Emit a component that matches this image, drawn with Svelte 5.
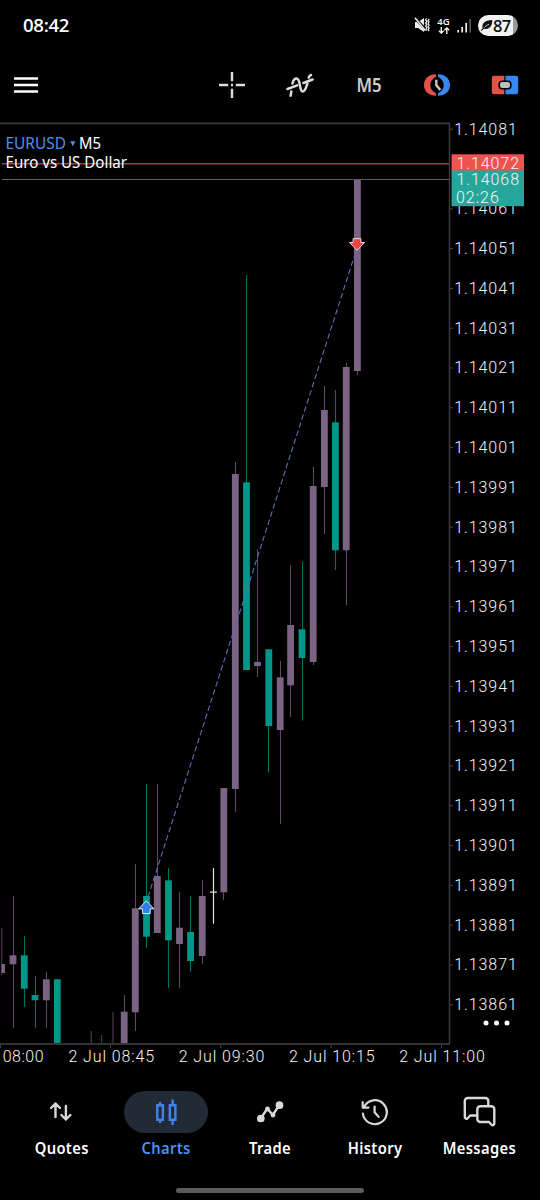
<script>
  const UP = '#7b6383';
  const DOWN = '#009688';
  // [centre x, high, body top, body bottom, low, colour]
  const candles = [
    [13, 896, 955.3, 964.3, 1027.7, UP],
    [24.3, 936, 955.3, 988.7, 1007, DOWN],
    [35, 976, 995, 1000.3, 1027.7, DOWN],
    [46.3, 972, 979.3, 1000.3, 1027.7, UP],
    [57.3, 979.3, 979.3, 1043, 1043, DOWN],
    [124.2, 995, 1011.7, 1043, 1043, UP],
    [135.3, 864, 908.3, 1012.3, 1031, UP],
    [146.5, 784, 896, 936.7, 947.7, DOWN],
    [157.3, 784, 876, 933, 933, UP],
    [168.5, 868, 880.3, 940.3, 988, DOWN],
    [179.5, 892, 927.7, 944, 988, UP],
    [190.6, 896, 932, 961, 971.7, DOWN],
    [202.2, 880, 896, 956, 963.7, UP],
    [223.8, 788, 788, 892.3, 900, UP],
    [235.3, 462, 474, 789, 812, UP],
    [246.5, 275, 482.3, 670, 670, DOWN],
    [257.5, 549.3, 662, 666, 677, UP],
    [268.8, 649.3, 649.3, 726, 772.7, DOWN],
    [280.2, 661, 677.3, 730, 824, UP],
    [290.6, 565.3, 625, 685.3, 717, UP],
    [302, 561.7, 629.3, 658, 720.7, DOWN],
    [313.2, 466.7, 486, 662, 665, UP],
    [324.4, 386, 410, 487, 534, UP],
    [335.4, 390, 422.3, 550.3, 570, DOWN],
    [346.2, 362.7, 367, 550.3, 605.3, UP],
    [357.4, 180, 180, 371, 375, UP]
  ];
  const prices = Array.from({ length: 23 }, (_, i) => ({
    label: ((114081 - i * 10) / 100000).toFixed(5),
    y: 129.2 + i * 39.8
  })).filter((p) => p.label !== '1.14071');
  const times = [
    { x: -38, tick: 0.5, label: '2 Jul 08:00' },
    { x: 68.5, tick: 110.5, label: '2 Jul 08:45' },
    { x: 178.8, tick: 220.8, label: '2 Jul 09:30' },
    { x: 289, tick: 331.2, label: '2 Jul 10:15' },
    { x: 399.3, tick: 441.5, label: '2 Jul 11:00' }
  ];
</script>

<div class="screen">
  <header class="status">
    <span class="clock">08:42</span>
    <div class="indicators">
      <svg width="16" height="16" viewBox="0 0 16 16">
        <path d="M1 5h3l6-4v14l-6-4H1z" fill="#eee" />
        <path d="M1.5 1.5l12 13" stroke="#000" stroke-width="2.600" />
        <path d="M1 .8l10.500 13" stroke="#eee" stroke-width="1.500" />
        <path d="M12.500 1.500l-1 1.500 1.500 1.500-1.500 1.500 1.500 1.500-1.500 1.500 1.500 1.500-1 1.500 1 1.500M15.300 2l-1.200 1.300 1 1.500-1 1.700 1 1.500-1 1.700 1 1.500-1 1.500 1 1.500" fill="none" stroke="#eee" stroke-width="1.200" />
      </svg>
      <div class="net">
        <span>4G</span>
        <svg width="12" height="7" viewBox="0 0 12 7" fill="none" stroke="#eee" stroke-width="1.4">
          <path d="M3.3 0v6M.9 3.7l2.400 2.400 2.400-2.400M8.800 7V1M6.400 3.300l2.400-2.400 2.400 2.400" />
        </svg>
      </div>
      <svg width="15" height="15" viewBox="0 0 15 15">
        <path d="M1.200 12v2.600M5.200 9v5.600M9.200 5v9.600" stroke="#eee" stroke-width="1.700" />
        <path d="M13.200 1v13.600" stroke="#555" stroke-width="1.700" />
      </svg>
      <div class="battery">
        <svg width="12" height="12" viewBox="0 0 12 12">
          <path d="M1.600 9C.7 5 3.500 1 11.300 1c0 6-2.700 9.400-7.200 8.900-.9 0-1.600-.4-2.500-.9z" fill="#111" />
          <path d="M2.600 9.300C4 7.600 5.500 6.400 8 5.200" stroke="#f2f2f2" stroke-width=".8" fill="none" />
          <path d="M.3 11.500L3 8.700" stroke="#111" stroke-width="1.200" />
        </svg>
        <span>87</span>
      </div>
    </div>
  </header>

  <div class="toolbar">
    <svg class="menu" width="24" height="18" viewBox="0 0 24 18">
      <path d="M0 2.500h24M0 9h24M0 15.500h24" stroke="#fff" stroke-width="2.500" />
    </svg>
    <svg class="cross" width="28" height="28" viewBox="0 0 28 28" stroke="#ddd" stroke-width="2.400">
      <path d="M14 1v9.200M14 17.800V27M1 14h9.200M17.800 14H27M13 14h2" />
    </svg>
    <svg class="indicator" width="28" height="26" viewBox="0 0 28 26" fill="none" stroke="#ddd" stroke-width="2.500" stroke-linecap="round">
      <path d="M1.500 17L11.200 13.300M17.500 11l9-3.500" />
      <path d="M4.600 23.700l.7-4.200M6.500 11.500c.8-3.300 2.200-5 3.900-5 4.800 0 2.300 13 6.300 13 2.700 0 3.500-4.800 4.700-7.800M22.700 5.600c.4-1.300 1.100-2.200 2.300-2.600" />
    </svg>
    <span class="period">M5</span>
    <svg class="session" width="28" height="24" viewBox="0 0 28 24">
      <path d="M13 1.200C5.800 1.200 1 5.800 1 12s4.800 10.800 12 10.800v-2.500C9.400 18.500 7.300 15.700 7.300 12S9.400 5.500 13 3.700z" fill="#df5349" />
      <path d="M15 1.200C22.200 1.200 27 5.800 27 12s-4.800 10.800-12 10.800v-2.500c3.600-1.800 5.700-4.600 5.700-8.300S18.600 5.500 15 3.700z" fill="#3688ef" />
      <path d="M13.300 6.700V12l4 5" fill="none" stroke="#c8c8c8" stroke-width="2.400" />
    </svg>
    <svg class="order" width="28" height="20" viewBox="0 0 28 20">
      <path d="M3 .7h10.300v18.600H3A2.200 2.200 0 0 1 .8 17V3A2.200 2.200 0 0 1 3 .7z" fill="#df5349" />
      <path d="M14.500.7H25A2.200 2.200 0 0 1 27.200 3v14a2.200 2.200 0 0 1-2.200 2.300H14.500z" fill="#3688ef" />
      <rect x="8.200" y="6.300" width="11.600" height="7.400" rx="3" fill="#b9c0bf" stroke="#000" stroke-width="1.600" />
    </svg>
  </div>

  <svg class="chart" width="540" height="948" viewBox="0 122 540 948">
    <path d="M0 123.300H449.500" stroke="#39393d" stroke-width="1.800" />
    <path d="M449.500 122.500V1044" stroke="#39393f" stroke-width="1.500" />
    <path d="M0 1044H450" stroke="#444447" stroke-width="1.700" />

    <path d="M2 163.700H449" stroke="#91444a" stroke-width="1.500" />
    <path d="M2 179.500H449" stroke="#4a676d" stroke-width="1.200" />

    <path d="M1.800 927.700V975" stroke={UP} stroke-opacity=".7" />
    <rect x="1.500" y="964" width="3.500" height="9" fill={UP} />
    <path d="M91.200 1031v12M113 1011.700V1043" stroke={UP} stroke-opacity=".7" />
    <path d="M101.700 1035v8" stroke={DOWN} stroke-opacity=".7" />

    {#each candles as [x, high, top, bottom, low, color]}
      <path d="M{Math.floor(x) + 0.5} {high}V{low}" stroke={color} stroke-opacity=".75" stroke-width="1.100" />
      <rect x={x - 3.4} y={top} width="6.800" height={bottom - top} fill={color} />
    {/each}
    <path d="M213.500 868v55.700M210 892.200h7" stroke="#e0e0e0" stroke-width="1.200" />

    <path d="M148 897L357 248" stroke="#5f6ab8" stroke-width="1.100" stroke-dasharray="5.500 3" />
    <path d="M146.300 900.700l7.600 8.200h-3.700v4.600h-7.800v-4.600h-3.700z" fill="#2f80ed" stroke="#dfe9f3" />
    <path d="M357 250.300l7.600-7.800h-3.700v-3.800h-7.800v3.800h-3.700z" fill="#ee4245" stroke="#f3d9da" />

    <g class="axis">
      {#each prices as p}
        <path d="M450 {p.y}h3" stroke="#45454a" />
        <text x="454.300" y={p.y + 5.3} textLength="62.500">{p.label}</text>
      {/each}
      {#each times as t}
        <path d="M{t.tick} 1045v3" stroke="#45454a" />
        <text x={t.x} y="1061.500" textLength={t.x < 0 ? 81.5 : 85.5}>{t.label}</text>
      {/each}
      <rect x="451.500" y="154.300" width="72.500" height="17" fill="#ef5350" />
      <rect x="451.500" y="170.500" width="72.500" height="35.700" fill="#26a69a" />
      <text x="456.500" y="168.900" textLength="62.500">1.14072</text>
      <text x="456.500" y="184.700" textLength="62.500">1.14068</text>
      <text x="456" y="202.600" textLength="42.800">02:26</text>
    </g>
    <g fill="#fff">
      <circle cx="486" cy="1023" r="2.500" />
      <circle cx="496.500" cy="1023" r="2.500" />
      <circle cx="507" cy="1023" r="2.500" />
    </g>
    <g class="title">
      <text x="5.500" y="149.300" textLength="60.500" lengthAdjust="spacingAndGlyphs" fill="#4a90f0">EURUSD</text>
      <path d="M70.300 141.300h5l-2.500 5z" fill="#4a90f0" />
      <text x="79" y="149.300" textLength="22" lengthAdjust="spacingAndGlyphs">M5</text>
      <text x="5.500" y="168.300" textLength="121.500" lengthAdjust="spacingAndGlyphs">Euro vs US Dollar</text>
    </g>
  </svg>

  <nav>
    <div class="item">
      <div class="pill">
        <svg width="24" height="22" viewBox="0 0 24 22" fill="none" stroke="#d8d8d8" stroke-width="2.400" stroke-linecap="round" stroke-linejoin="round">
          <path d="M6.500 16V2.500M2 7l4.500-4.500L11 7M16.900 5v13.500M12.400 14l4.500 4.500 4.500-4.500" />
        </svg>
      </div>
      <span>Quotes</span>
    </div>
    <div class="item active">
      <div class="pill">
        <svg width="24" height="28" viewBox="0 0 24 28" fill="none" stroke="#3f84ee" stroke-width="2.400">
          <path d="M3.300 7.200h5.600v14.500H3.300zM6.100 4v3M6.100 22v3M15.800 7.200h5.600v14.500h-5.600zM18.600 1.500V7M18.600 22v5" />
        </svg>
      </div>
      <span>Charts</span>
    </div>
    <div class="item">
      <div class="pill">
        <svg width="28" height="24" viewBox="0 0 28 24" fill="#d8d8d8" stroke="#d8d8d8" stroke-width="2.300" stroke-linejoin="round">
          <path d="M4.800 18.500L11.300 8.500l5.500 6.500 6.500-10" fill="none" />
          <circle cx="4.800" cy="18.500" r="2.700" />
          <circle cx="11.500" cy="9" r="1.300" />
          <circle cx="17" cy="15" r="1.300" />
          <circle cx="23.500" cy="5.200" r="2.700" />
        </svg>
      </div>
      <span>Trade</span>
    </div>
    <div class="item">
      <div class="pill">
        <svg width="28" height="28" viewBox="0 0 28 28" fill="none" stroke="#d8d8d8" stroke-width="2.200" stroke-linecap="round" stroke-linejoin="round">
          <path d="M1.900 15.500A12 12 0 1 0 3.200 8.600M1.700 4.200v5.400h5.800M13.600 8.600v5.700l4 4.600" />
        </svg>
      </div>
      <span>History</span>
    </div>
    <div class="item">
      <div class="pill">
        <svg width="34" height="32" viewBox="0 0 34 32" fill="none" stroke="#d8d8d8" stroke-width="2.400" stroke-linejoin="round" stroke-linecap="round">
          <path d="M13.200 19.500H7.300l-3 3c-.8.700-2.500.2-2.500-1.400V5a3 3 0 0 1 3-3h17.500a3 3 0 0 1 3 3v5" />
          <path d="M17.300 10.300h11a3 3 0 0 1 3 3v14.300c0 1.800-1.900 2-2.800 1.100l-2.500-2.700h-8.700a3 3 0 0 1-3-3v-9.700a3 3 0 0 1 3-3z" />
        </svg>
      </div>
      <span>Messages</span>
    </div>
  </nav>
  <div class="handle"></div>
</div>

<style>
  :global(body) { margin: 0; background: #000; }
  .screen {
    width: 540px;
    height: 1200px;
    display: flex;
    flex-direction: column;
    overflow: hidden;
    background: #000;
    color: #fff;
    font-family: "Noto Sans", sans-serif;
  }
  svg { display: block; flex: none; }
  .chart { overflow: visible; }
  .status {
    height: 50px;
    box-sizing: border-box;
    padding: 0 22px 0 23px;
    display: flex;
    align-items: center;
    justify-content: space-between;
  }
  .clock { font: 600 18.600px/20px "Open Sans", sans-serif; letter-spacing: -0.300px; padding-bottom: 1px; }
  .indicators { display: flex; align-items: center; gap: 6px; }
  .net { width: 15px; display: flex; flex-direction: column; align-items: center; gap: 1px; }
  .net span { font: 600 9.500px/9px "Open Sans", sans-serif; }
  .battery {
    width: 40px;
    height: 21px;
    border-radius: 11px;
    background: linear-gradient(90deg, #f2f2f2 87%, #999 87%);
    display: flex;
    align-items: center;
    padding-left: 3px;
    box-sizing: border-box;
    gap: 0;
    color: #111;
  }
  .battery span { font: 600 16.500px/21px "Open Sans", sans-serif; letter-spacing: -0.700px; }
  .toolbar {
    height: 72px;
    box-sizing: border-box;
    padding: 0 21px 2px 14px;
    display: flex;
    align-items: center;
  }
  .cross { margin-left: 180px; }
  .indicator { margin-left: 40px; }
  .period {
    width: 26px;
    margin-left: 41.500px;
    margin-right: 1.500px;
    display: flex;
    justify-content: center;
    font: 600 19px/24px "Noto Sans", sans-serif;
    transform: scaleX(0.880);
    color: #ccc;
  }
  .session { margin-left: 40px; }
  .order { margin-left: 40px; }
  .axis text { font: 300 16px Roboto, sans-serif; fill: #f4f4f4; }
  .title { font: 400 16.500px "Noto Sans", sans-serif; fill: #fff; }
  nav {
    height: 110px;
    box-sizing: border-box;
    padding: 21px 8px 0 9px;
    display: grid;
    grid-template-columns: repeat(5, 104.600px);
    align-items: start;
  }
  .item { display: flex; flex-direction: column; align-items: center; }
  .pill {
    width: 84px;
    height: 42px;
    border-radius: 21px;
    display: flex;
    align-items: center;
    justify-content: center;
  }
  .active .pill { background: #222a35; }
  .item span {
    margin-top: 4px;
    font-size: 16.200px;
    line-height: 22px;
    font-weight: 600;
    letter-spacing: 0.400px;
    transform: scaleX(0.910);
  }
  .active span { color: #4a90f0; }
  .handle {
    width: 188px;
    height: 5px;
    border-radius: 3px;
    background: #5c5c5c;
    margin: 8px auto 0;
  }
</style>
